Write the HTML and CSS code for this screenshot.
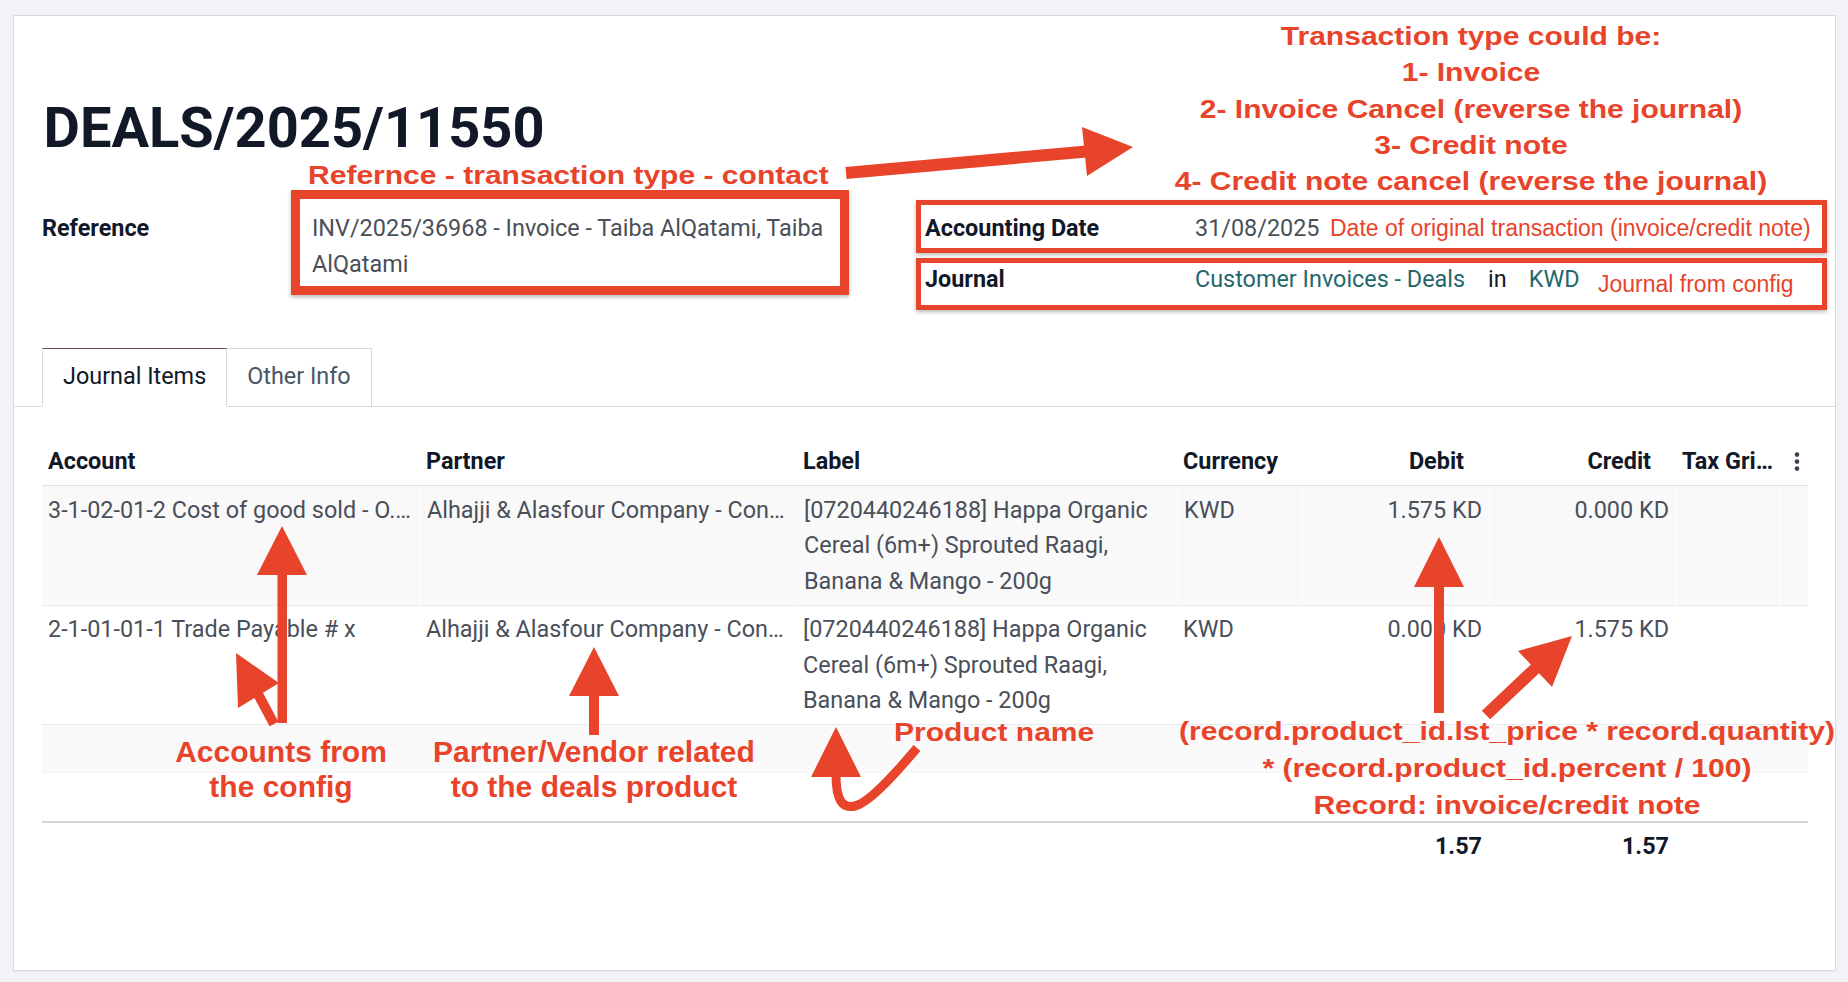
FILE: index.html
```html
<!DOCTYPE html>
<html lang="en">
<head>
<meta charset="utf-8">
<title>DEALS/2025/11550</title>
<link rel="stylesheet" href="styles.css">
</head>
<body>
<div class="page">
  <div class="sheet">
    <h1 class="title">DEALS/2025/11550</h1>
    <div class="groups">
      <div class="group">
        <div class="field">
          <div class="label">Reference</div>
          <div class="value ref">INV/2025/36968 - Invoice - Taiba AlQatami, Taiba AlQatami</div>
        </div>
      </div>
      <div class="group">
        <div class="field">
          <div class="label">Accounting Date</div>
          <div class="value">31/08/2025</div>
        </div>
        <div class="field">
          <div class="label">Journal</div>
          <div class="value"><span class="link">Customer Invoices - Deals</span><span class="in">in</span><span class="link">KWD</span></div>
        </div>
      </div>
    </div>

    <div class="tabs">
      <div class="tab active">Journal Items</div>
      <div class="tab">Other Info</div>
    </div>

    <table class="lines">
      <colgroup>
        <col class="c-account">
        <col class="c-partner">
        <col class="c-label">
        <col class="c-currency">
        <col class="c-debit">
        <col class="c-credit">
        <col class="c-tax">
        <col class="c-opt">
      </colgroup>
      <thead>
        <tr>
          <th>Account</th>
          <th>Partner</th>
          <th>Label</th>
          <th>Currency</th>
          <th class="num">Debit</th>
          <th class="num">Credit</th>
          <th>Tax Grids</th>
          <th class="opt"><svg class="dots" width="6" height="20" viewBox="0 0 6 20"><circle cx="3" cy="2.6" r="2.3"/><circle cx="3" cy="9.6" r="2.3"/><circle cx="3" cy="16.6" r="2.3"/></svg></th>
        </tr>
      </thead>
      <tbody>
        <tr class="row odd sel">
          <td class="trunc">3-1-02-01-2 Cost of good sold - O.…</td>
          <td class="trunc">Alhajji &amp; Alasfour Company - Con…</td>
          <td>[0720440246188] Happa Organic Cereal (6m+) Sprouted Raagi, Banana &amp; Mango - 200g</td>
          <td>KWD</td>
          <td class="num">1.575 KD</td>
          <td class="num">0.000 KD</td>
          <td></td>
          <td></td>
        </tr>
        <tr class="row">
          <td class="trunc">2-1-01-01-1 Trade Payable # x</td>
          <td class="trunc">Alhajji &amp; Alasfour Company - Con…</td>
          <td>[0720440246188] Happa Organic Cereal (6m+) Sprouted Raagi, Banana &amp; Mango - 200g</td>
          <td>KWD</td>
          <td class="num">0.000 KD</td>
          <td class="num">1.575 KD</td>
          <td></td>
          <td></td>
        </tr>
        <tr class="empty odd"><td>&nbsp;</td><td></td><td></td><td></td><td></td><td></td><td></td><td></td></tr>
        <tr class="empty last"><td>&nbsp;</td><td></td><td></td><td></td><td></td><td></td><td></td><td></td></tr>
      </tbody>
      <tfoot>
        <tr>
          <td></td><td></td><td></td><td></td>
          <td class="num">1.57</td>
          <td class="num">1.57</td>
          <td></td><td></td>
        </tr>
      </tfoot>
    </table>
  </div>
</div>

<div class="ann">
  <svg class="ann-svg" width="1848" height="982" viewBox="0 0 1848 982">
    <g fill="#e8432b" stroke="none">
      <polygon points="845.5,167 1086,145.5 1087,157.5 846.5,179"/>
      <polygon points="1082,127 1133,147 1087,176"/>
      <rect x="277.5" y="573" width="9.5" height="150"/>
      <polygon points="257,575 307,575 282,526"/>
      <polygon points="236,653 238,708 279,683"/>
      <rect x="589" y="694" width="10" height="41"/>
      <polygon points="569,696 619,696 594,647"/>
      <rect x="1434" y="585" width="10" height="128"/>
      <polygon points="1414,587 1464,587 1439,537"/>
      <polygon points="1572,636 1518,651 1552,687"/>
    </g>
    <g stroke="#e8432b" fill="none">
      <line x1="258" y1="694" x2="274" y2="724" stroke-width="10"/>
      <line x1="1537" y1="667" x2="1486" y2="715" stroke-width="12"/>
      <path d="M836 774 C836 800 842 809 855 806 C868 803 890 780 917 748" stroke-width="9"/>
    </g>
    <polygon fill="#e8432b" points="836,727 811,777 861,777"/>
  </svg>

  <div class="box box-ref"></div>
  <div class="box thin box-date"></div>
  <div class="box thin box-journal"></div>

  <div class="note-b n-ref">Refernce - transaction type - contact</div>
  <div class="note-b center n-types">Transaction type could be:<br>1- Invoice<br>2- Invoice Cancel (reverse the journal)<br>3- Credit note<br>4- Credit note cancel (reverse the journal)</div>
  <div class="note-r n-date">Date of original transaction (invoice/credit note)</div>
  <div class="note-r n-journal">Journal from config</div>
  <div class="note-c n-accounts">Accounts from<br>the config</div>
  <div class="note-c n-partner">Partner/Vendor related<br>to the deals product</div>
  <div class="note-b n-product">Product name</div>
  <div class="note-b center n-formula">(record.product_id.lst_price * record.quantity)<br>* (record.product_id.percent / 100)<br>Record: invoice/credit note</div>
</div>
</body>
</html>
```

FILE: styles.css
```css
* { box-sizing: border-box; }
html, body { margin: 0; padding: 0; }
body {
  width: 1848px;
  height: 982px;
  overflow: hidden;
  position: relative;
  background: #f2f3f6;
  font-family: Roboto, "Liberation Sans", Arial, sans-serif;
  font-size: 23.4px;
  line-height: 36px;
  color: #111827;
}

.page { padding: 15px 12px 11px 13px; height: 982px; }
.sheet {
  background: #fff;
  border: 1px solid #d8dadf;
  height: 956px;
  padding: 0 27px 0 28px;
  box-shadow: 0 1px 3px rgba(0,0,0,0.04);
}

.title {
  margin: 78px 0 0 1.5px;
  font-size: 56px;
  line-height: 68px;
  font-weight: 700;
  color: #111827;
}

.groups { display: grid; grid-template-columns: 883px 1fr; margin-top: 48px; }
.field { display: grid; grid-template-columns: 270px 1fr; }
.field + .field { margin-top: 15px; }
.label { font-weight: 700; color: #111827; }
.value { color: #4a4f59; }
.value.ref { max-width: 545px; }
.link { color: #24676b; }
.in { color: #111827; margin: 0 22px 0 23px; }

.tabs {
  display: flex;
  margin: 51px -27px 0 -28px;
  padding-left: 28px;
  border-bottom: 1px solid #d8dadf;
}
.tab {
  padding: 9px 20px 12px;
  border: 1px solid #d8dadf;
  margin-bottom: -1px;
  color: #4b5563;
  line-height: 36px;
}
.tab + .tab { border-left: none; }
.tab.active { border-top-color: #714b67; border-bottom-color: #fff; color: #111827; }

.lines {
  width: 1766px;
  table-layout: fixed;
  border-collapse: separate;
  border-spacing: 0;
  margin-top: 31px;
}
.c-account { width: 378px; }
.c-partner { width: 377px; }
.c-label { width: 380px; }
.c-currency { width: 125px; }
.c-debit { width: 187px; }
.c-credit { width: 187px; }
.c-tax { width: 104px; }
.c-opt { width: 28px; }

.lines th {
  font-weight: 700;
  text-align: left;
  padding: 5px 6px 6px;
  line-height: 36px;
  border-bottom: 1px solid #dfe1e5;
  white-space: nowrap;
  overflow: hidden;
  text-overflow: ellipsis;
  color: #111827;
}
.lines th.num { text-align: right; padding-right: 25px; }
.lines th.opt { padding: 0; vertical-align: top; }
.dots { display: block; margin: 14px 0 0 14px; fill: #374151; }

.lines td {
  padding: 6.5px 6px 5.5px;
  line-height: 35.5px;
  color: #4a4f59;
  border-bottom: 1px solid #e8eaed;
  vertical-align: top;
}
.lines td.num { text-align: right; padding-right: 7px; }
.lines td.trunc { white-space: nowrap; overflow: hidden; text-overflow: ellipsis; }
.row.odd td { background: #f9f9fa; }
.row.sel td { border-left: 1px solid #fff; }
.row.sel td:first-child { border-left: none; }
.empty td { padding: 6px 6px 5.5px; border-bottom: 1px solid #f4f4f5; }
.empty.odd td { background: #fafafa; }
.empty.last td { border-bottom: none; padding-bottom: 6px; }

.lines tfoot td {
  border-top: 2px solid #d3d5d9;
  border-bottom: none;
  padding: 5.5px 6px 6px;
  line-height: 36px;
  font-weight: 700;
  color: #111827;
}

/* annotation overlay */
.ann {
  position: absolute;
  left: 0;
  top: 0;
  width: 1848px;
  height: 982px;
  overflow: hidden;
  pointer-events: none;
  color: #e8432b;
  font-family: "Liberation Sans", Arial, sans-serif;
}
.ann-svg { position: absolute; left: 0; top: 0; }

.box {
  position: absolute;
  border: 9px solid #e8432b;
  box-shadow: 0 2px 4px rgba(0,0,0,0.28);
}
.box.thin { border-width: 5px; }
.box-ref { left: 291px; top: 190px; width: 558px; height: 105px; }
.box-date { left: 916px; top: 200px; width: 911px; height: 53px; }
.box-journal { left: 916px; top: 258px; width: 911px; height: 52px; }

.note-b {
  position: absolute;
  font-weight: 700;
  font-size: 26px;
  line-height: 36px;
  white-space: nowrap;
  transform: scaleX(1.155);
  transform-origin: 0 0;
}
.note-b.center { text-align: center; width: 580px; transform-origin: 50% 0; }
.n-ref { left: 308px; top: 157px; }
.n-types { left: 1181px; top: 18px; line-height: 36.3px; }
.n-product { left: 894px; top: 714px; }
.n-formula { left: 1217px; top: 713px; line-height: 37px; }

.note-r {
  position: absolute;
  font-size: 23px;
  line-height: 30px;
  white-space: nowrap;
}
.n-date { left: 1330px; top: 213px; }
.n-journal { left: 1598px; top: 269px; }

.note-c {
  position: absolute;
  width: 340px;
  text-align: center;
  font-weight: 700;
  font-size: 30px;
  line-height: 35px;
  white-space: nowrap;
}
.n-accounts { left: 111px; top: 734px; }
.n-partner { left: 424px; top: 734px; }
```
